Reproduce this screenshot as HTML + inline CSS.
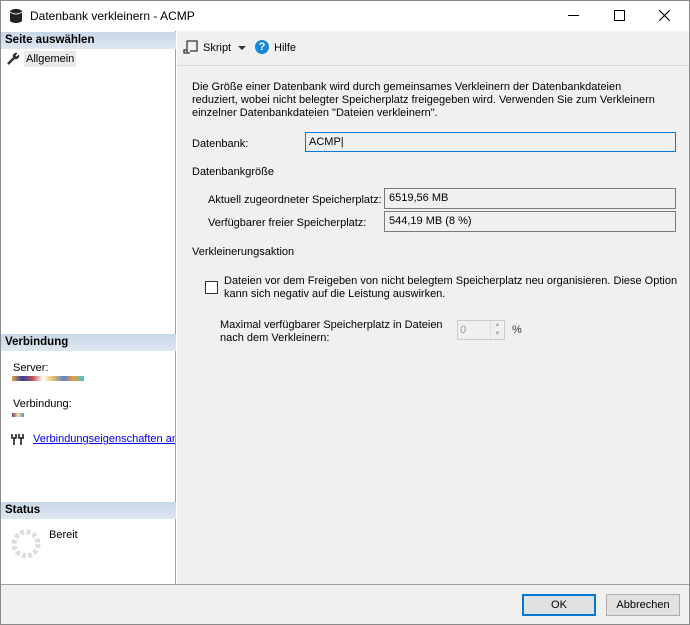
<!DOCTYPE html><html><head><meta charset="utf-8"><style>
*{margin:0;padding:0;box-sizing:border-box}
body{width:690px;height:625px;overflow:hidden;font-family:"Liberation Sans",sans-serif;font-size:11px;color:#000;background:#fff;position:relative}
.a{position:absolute}
.win{left:0;top:0;width:690px;height:625px;border:1px solid #8a8a8a}
.hdr{background:linear-gradient(#c9d7e6,#dde7f1);font-weight:bold;font-size:11.5px;height:17px;line-height:17px;padding-left:4px;width:175px;left:1px}
.box{background:#f0f0f0;border:1px solid #7a7a7a;height:21px;line-height:19px;padding-left:4px}
</style></head><body>
<div class="a win"></div>
<div class="a" style="left:1px;top:1px;width:688px;height:30px;background:#fff"></div>
<svg class="a" style="left:9px;top:8px" width="14" height="16" viewBox="0 0 14 16"><ellipse cx="7" cy="3.5" rx="6" ry="2.5" fill="#222"/><rect x="1" y="3.5" width="12" height="9" fill="#222"/><ellipse cx="7" cy="12.5" rx="6" ry="2.5" fill="#222"/><path d="M1 4 Q7 8 13 4" stroke="#fff" stroke-width="0.8" fill="none"/></svg>
<div class="a" style="left:30px;top:9px;font-size:12px">Datenbank verkleinern - ACMP</div>
<div class="a" style="left:568px;top:15px;width:11px;height:1px;background:#000"></div>
<div class="a" style="left:614px;top:10px;width:11px;height:11px;border:1px solid #000"></div>
<svg class="a" style="left:659px;top:10px" width="11" height="11"><path d="M0 0L11 11M11 0L0 11" stroke="#000" stroke-width="1.1"/></svg>
<div class="a" style="left:1px;top:31px;width:175px;height:553px;background:#fff;border-right:1px solid #a0a0a0"></div>
<div class="a hdr" style="top:32px">Seite auswählen</div>
<svg class="a" style="left:7px;top:52px" width="13" height="13" viewBox="0 0 13 13"><path d="M1 12 L7 6" stroke="#333" stroke-width="2.5"/><circle cx="9" cy="4" r="3.2" fill="#333"/><path d="M9 4 L12 1" stroke="#fff" stroke-width="1.6"/></svg>
<div class="a" style="left:24px;top:51px;background:#eaeaea;padding:0 2px;height:16px;line-height:16px">Allgemein</div>
<div class="a hdr" style="top:334px">Verbindung</div>
<div class="a" style="left:13px;top:362px">Server:</div>
<div class="a" style="left:12px;top:376px;width:72px;height:5px;background:linear-gradient(90deg,#e9a23b,#3040a0,#c05050,#fff,#e0c060,#6080d0,#e9a23b,#40c0e0)"></div>
<div class="a" style="left:13px;top:398px">Verbindung:</div>
<div class="a" style="left:12px;top:413px;width:12px;height:4px;background:linear-gradient(90deg,#803070,#f0e0a0,#6090d0)"></div>
<svg class="a" style="left:11px;top:433px" width="13" height="13" viewBox="0 0 13 13"><path d="M1 1v4h4V1M3 5v7M8 1v4h4V1M10 5v7M7 5h6" stroke="#222" stroke-width="1.6" fill="none"/></svg>
<div class="a" style="left:33px;top:433px;color:#0000ee;text-decoration:underline;white-space:nowrap;width:142px;overflow:hidden">Verbindungseigenschaften anzeigen</div>
<div class="a hdr" style="top:502px">Status</div>
<svg class="a" style="left:10px;top:528px" width="32" height="32" viewBox="0 0 32 32"><circle cx="16" cy="16" r="12" fill="none" stroke="#ddd" stroke-width="5" stroke-dasharray="4 2.3"/></svg>
<div class="a" style="left:49px;top:529px">Bereit</div>
<div class="a" style="left:177px;top:31px;width:512px;height:553px;background:#f0f0f0"></div>
<svg class="a" style="left:183px;top:40px" width="15" height="15" viewBox="0 0 15 15"><path d="M4 1h10v10H7M4 1v12H1V10h3M4 13h3" stroke="#333" stroke-width="1.3" fill="none"/></svg>
<div class="a" style="left:203px;top:42px">Skript</div>
<svg class="a" style="left:238px;top:46px" width="8" height="5"><path d="M0 0h8L4 4z" fill="#333"/></svg>
<div class="a" style="left:255px;top:40px;width:14px;height:14px;border-radius:50%;background:#1c87d6;color:#fff;font-weight:bold;font-size:11px;text-align:center;line-height:14px">?</div>
<div class="a" style="left:274px;top:42px">Hilfe</div>
<div class="a" style="left:177px;top:65px;width:512px;height:1px;background:#d8d8d8"></div>
<div class="a" style="left:192px;top:81px;line-height:13px;white-space:nowrap">Die Größe einer Datenbank wird durch gemeinsames Verkleinern der Datenbankdateien<br>reduziert, wobei nicht belegter Speicherplatz freigegeben wird. Verwenden Sie zum Verkleinern<br>einzelner Datenbankdateien "Dateien verkleinern".</div>
<div class="a" style="left:192px;top:138px">Datenbank:</div>
<div class="a" style="left:305px;top:132px;width:371px;height:20px;border:1px solid #0078d7;background:#f0f0f0;line-height:18px;padding-left:3px">ACMP|</div>
<div class="a" style="left:192px;top:166px">Datenbankgröße</div>
<div class="a" style="left:208px;top:194px">Aktuell zugeordneter Speicherplatz:</div>
<div class="a box" style="left:384px;top:188px;width:292px">6519,56 MB</div>
<div class="a" style="left:208px;top:217px">Verfügbarer freier Speicherplatz:</div>
<div class="a box" style="left:384px;top:211px;width:292px">544,19 MB (8 %)</div>
<div class="a" style="left:192px;top:246px">Verkleinerungsaktion</div>
<div class="a" style="left:205px;top:281px;width:13px;height:13px;border:1px solid #333;background:#fff"></div>
<div class="a" style="left:224px;top:275px;line-height:13px;white-space:nowrap">Dateien vor dem Freigeben von nicht belegtem Speicherplatz neu organisieren. Diese Option<br>kann sich negativ auf die Leistung auswirken.</div>
<div class="a" style="left:220px;top:319px;line-height:13px;white-space:nowrap">Maximal verfügbarer Speicherplatz in Dateien<br>nach dem Verkleinern:</div>
<div class="a" style="left:457px;top:320px;width:48px;height:20px;border:1px solid #ccc;background:#f0f0f0;color:#999;padding-left:2px;line-height:18px">0</div>
<div class="a" style="left:490px;top:321px;width:14px;height:18px;border-left:1px solid #ddd;color:#aaa;font-size:6px;text-align:center;line-height:9px">▲<br>▼</div>
<div class="a" style="left:512px;top:324px;color:#333">%</div>
<div class="a" style="left:1px;top:584px;width:688px;height:1px;background:#a0a0a0"></div>
<div class="a" style="left:1px;top:585px;width:688px;height:39px;background:#f0f0f0"></div>
<div class="a" style="left:522px;top:594px;width:74px;height:22px;border:2px solid #0078d7;background:#e1e1e1;text-align:center;line-height:18px">OK</div>
<div class="a" style="left:606px;top:594px;width:74px;height:22px;border:1px solid #adadad;background:#e1e1e1;text-align:center;line-height:20px">Abbrechen</div>
</body></html>
